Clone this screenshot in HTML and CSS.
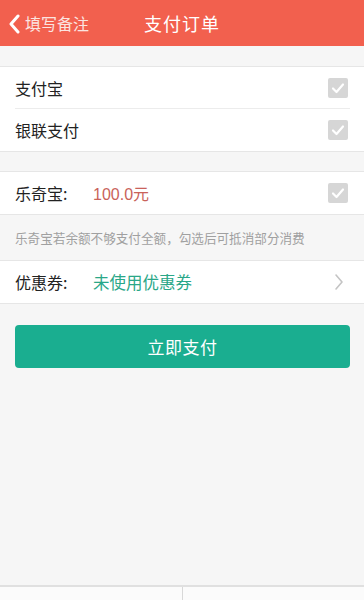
FILE: index.html
```html
<!DOCTYPE html>
<html>
<head>
<meta charset="utf-8">
<link rel="stylesheet" href="styles.css">
</head>
<body>
<div class="page">
  <header class="topbar">
    <div class="back">
      <svg class="back-icon" width="12" height="20" viewBox="0 0 12 20"><path d="M10 2 L3 10 L10 18" fill="none" stroke="#fff" stroke-width="3" stroke-linecap="round" stroke-linejoin="round"/></svg>
      <span>填写备注</span>
    </div>
    <h1 class="title">支付订单</h1>
  </header>

  <section class="group group-first">
    <div class="row row-divided">
      <span class="label">支付宝</span>
      <span class="check"><svg width="20" height="20" viewBox="0 0 20 20"><path d="M5 10.5 L8.5 14 L15 6.5" fill="none" stroke="#fff" stroke-width="2.2" stroke-linecap="round" stroke-linejoin="round"/></svg></span>
    </div>
    <div class="row">
      <span class="label">银联支付</span>
      <span class="check"><svg width="20" height="20" viewBox="0 0 20 20"><path d="M5 10.5 L8.5 14 L15 6.5" fill="none" stroke="#fff" stroke-width="2.2" stroke-linecap="round" stroke-linejoin="round"/></svg></span>
    </div>
  </section>

  <section class="group group-second">
    <div class="row">
      <span class="label label-fixed">乐奇宝:</span>
      <span class="amount">100.0元</span>
      <span class="check"><svg width="20" height="20" viewBox="0 0 20 20"><path d="M5 10.5 L8.5 14 L15 6.5" fill="none" stroke="#fff" stroke-width="2.2" stroke-linecap="round" stroke-linejoin="round"/></svg></span>
    </div>
  </section>
  <p class="note">乐奇宝若余额不够支付全额，勾选后可抵消部分消费</p>
  <section class="group">
    <div class="row">
      <span class="label label-fixed">优惠券:</span>
      <span class="coupon">未使用优惠券</span>
      <svg class="chevron" width="10" height="18" viewBox="0 0 10 18"><path d="M2 2 L8 9 L2 16" fill="none" stroke="#c4c4c4" stroke-width="1.6" stroke-linecap="round" stroke-linejoin="round"/></svg>
    </div>
  </section>

  <div class="action">
    <button class="pay">立即支付</button>
  </div>

  <div class="spacer"></div>
  <footer class="bottombar">
    <div class="tab"></div>
    <div class="tab tab-right"></div>
  </footer>
</div>
</body>
</html>
```

FILE: styles.css
```css
* { box-sizing: border-box; }
html, body {
  margin: 0;
  padding: 0;
  background: #f6f6f6;
  font-family: "Noto Sans CJK SC", "Liberation Sans", sans-serif;
}
.page {
  width: 364px;
  height: 600px;
  display: flex;
  flex-direction: column;
  overflow: hidden;
}
.topbar {
  height: 46px;
  background: #f2604e;
  display: flex;
  align-items: center;
  justify-content: center;
  position: relative;
  flex-shrink: 0;
}
.back {
  position: absolute;
  left: 8px;
  top: 0;
  height: 46px;
  display: flex;
  align-items: center;
  gap: 5px;
  color: #fbe4e0;
  font-size: 16px;
}
.back-icon { margin-top: 1px; }
.title {
  margin: 0;
  font-size: 18px;
  font-weight: 400;
  color: #fff;
  letter-spacing: 1px;
}
.group {
  background: #fff;
  border-top: 1px solid #e6e6e6;
  border-bottom: 1px solid #e6e6e6;
}
.group-first { margin-top: 20px; }
.group-second { margin-top: 19px; }
.row {
  height: 42px;
  display: flex;
  align-items: center;
  padding: 0 16px 0 15px;
  position: relative;
}
.row-divided::after {
  content: "";
  position: absolute;
  left: 15px;
  right: 14px;
  bottom: 0;
  height: 1px;
  background: #ececec;
}
.label {
  font-size: 16px;
  color: #222;
}
.label-fixed { width: 78px; }
.amount {
  font-size: 16px;
  color: #c9625a;
  font-family: "Liberation Sans", "Noto Sans CJK SC", sans-serif;
}
.coupon {
  font-size: 16.5px;
  color: #2aa788;
}
.check {
  margin-left: auto;
  width: 20px;
  height: 20px;
  border-radius: 2px;
  background: #d6d6d6;
  display: flex;
}
.chevron {
  margin-left: auto;
  margin-right: 4px;
}
.note {
  margin: 0;
  height: 45px;
  display: flex;
  align-items: center;
  padding: 0 15px;
  font-size: 12.6px;
  color: #a0a0a0;
}
.action {
  padding: 21px 14px 0 15px;
}
.pay {
  width: 100%;
  height: 43px;
  border: none;
  border-radius: 4px;
  background: #1aae90;
  color: #fff;
  font-size: 17px;
  font-family: "Noto Sans CJK SC", sans-serif;
  letter-spacing: 0.5px;
}
.spacer { flex: 1; }
.bottombar {
  height: 15px;
  border-top: 2px solid #e0e0e0;
  background: #fbfbfb;
  display: flex;
  flex-shrink: 0;
}
.tab { flex: 1; }
.tab-right { border-left: 1px solid #d8d8d8; }
```
